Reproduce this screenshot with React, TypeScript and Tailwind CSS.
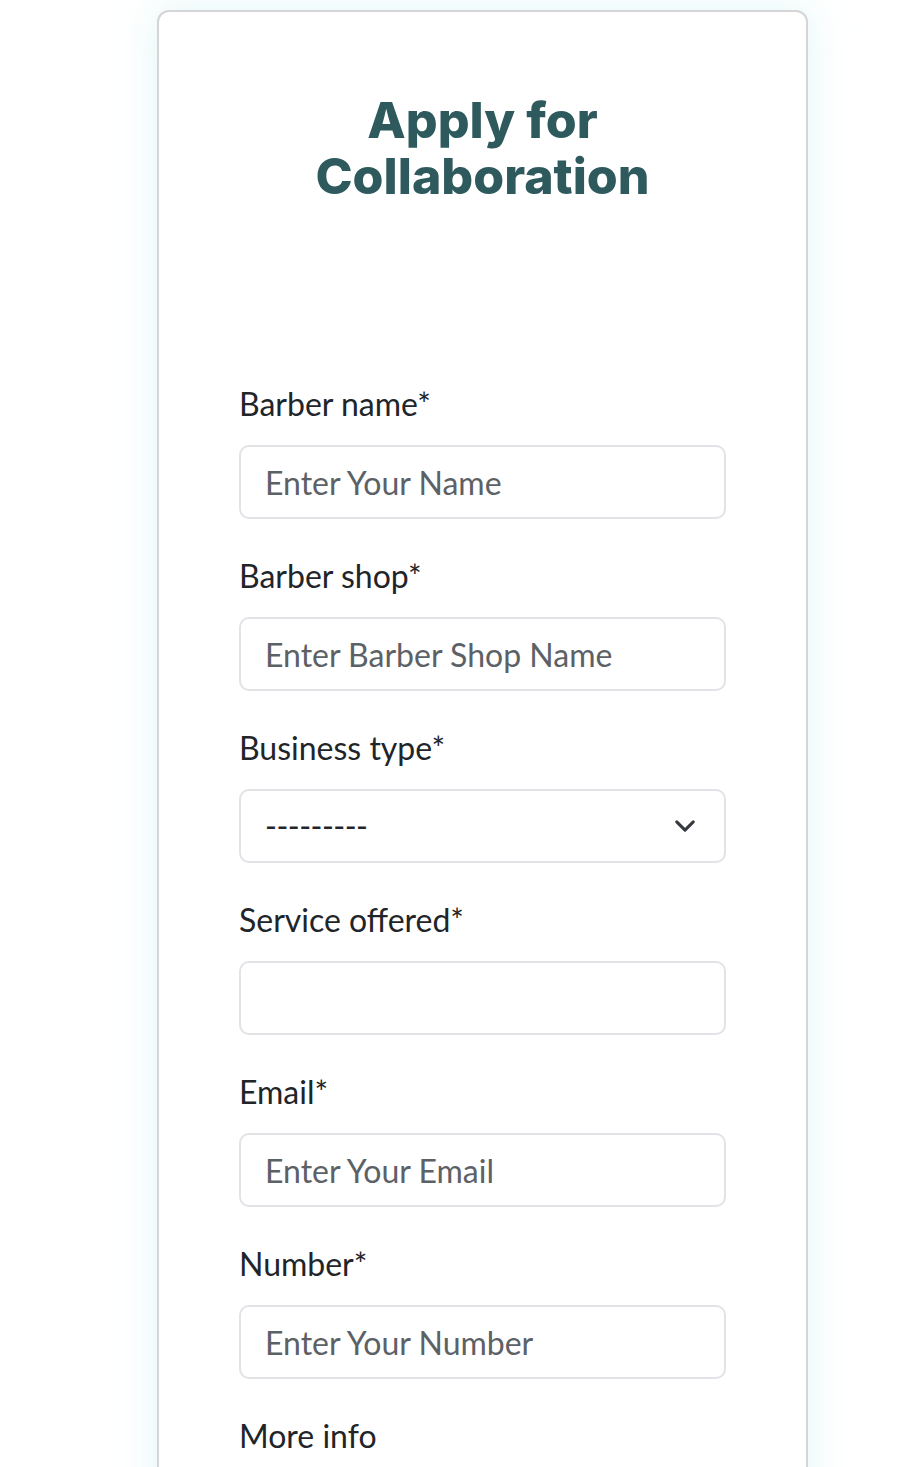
import React from "react";

const fields = [
  { label: "Barber name*", placeholder: "Enter Your Name" },
  { label: "Barber shop*", placeholder: "Enter Barber Shop Name" },
];

const fieldsAfter = [
  { label: "Service offered*", placeholder: "" },
  { label: "Email*", placeholder: "Enter Your Email" },
  { label: "Number*", placeholder: "Enter Your Number" },
];

const inputCls =
  "block h-[74px] w-full rounded-[10px] border-2 border-[#e1e3e6] bg-white px-6 text-[32px] text-[#212529] outline-none placeholder:text-[#5c6166]";

const labelCls = "mb-[23px] block text-[32px] leading-[36px] text-[#212529]";

function Field({ label, placeholder }: { label: string; placeholder: string }) {
  return (
    <div className="mb-[39px]">
      <label className={labelCls}>{label}</label>
      <input type="text" placeholder={placeholder} className={inputCls} />
    </div>
  );
}

export default function App() {
  return (
    <div className="min-h-screen bg-white pb-10" style={{ fontFamily: "Lato, 'Noto Sans', sans-serif" }}>
      <div className="ml-[157px] mt-[10px] w-[651px] rounded-[12px] border-2 border-[#d5d5d5] bg-white px-[80px] pt-[80px] pb-10 shadow-[0_0_40px_rgba(200,238,240,0.55)]">
        <h1
          className="mx-auto text-center text-[50px] font-extrabold leading-[56px] text-[#2e5a5e]"
          style={{ fontFamily: "Inter, 'Open Sans', sans-serif" }}
        >
          Apply for
          <br />
          Collaboration
        </h1>

        <form className="mt-[182px]">
          {fields.map((f) => (
            <Field key={f.label} {...f} />
          ))}

          <div className="mb-[39px]">
            <label className={labelCls}>Business type*</label>
            <div className="relative">
              <select className={`${inputCls} appearance-none tracking-[-0.5px]`} defaultValue="">
                <option value="">---------</option>
                <option value="shop">Barber shop</option>
                <option value="freelance">Freelance</option>
              </select>
              <svg
                className="pointer-events-none absolute right-[30px] top-1/2 h-[22px] w-[22px] -translate-y-1/2"
                viewBox="0 0 16 16"
                fill="none"
                stroke="#343a40"
                strokeWidth="2.2"
                strokeLinecap="round"
                strokeLinejoin="round"
              >
                <path d="M2 5l6 6 6-6" />
              </svg>
            </div>
          </div>

          {fieldsAfter.map((f) => (
            <Field key={f.label} {...f} />
          ))}

          <div className="mb-[39px]">
            <label className={labelCls}>More info</label>
            <textarea rows={4} className="block w-full rounded-[10px] border-2 border-[#e1e3e6] px-6 py-4 text-[32px] outline-none" />
          </div>
        </form>
      </div>
    </div>
  );
}
